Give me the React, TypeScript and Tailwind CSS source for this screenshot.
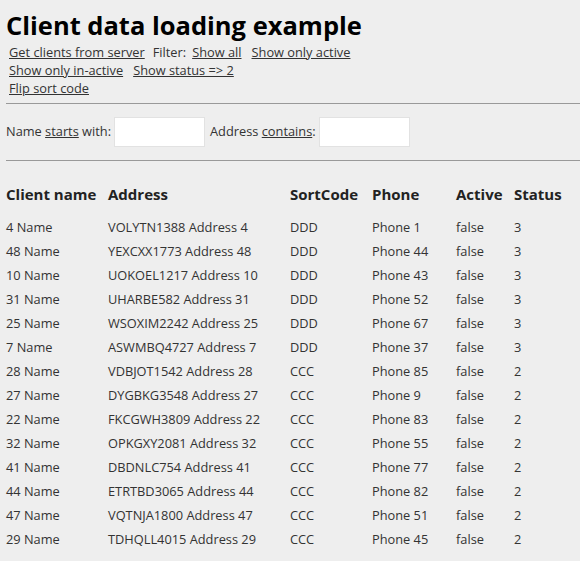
import React from 'react';

type Client = {
  name: string;
  address: string;
  sortCode: string;
  phone: string;
  active: boolean;
  status: number;
};

const clients: Client[] = [
  { name: '4 Name', address: 'VOLYTN1388 Address 4', sortCode: 'DDD', phone: 'Phone 1', active: false, status: 3 },
  { name: '48 Name', address: 'YEXCXX1773 Address 48', sortCode: 'DDD', phone: 'Phone 44', active: false, status: 3 },
  { name: '10 Name', address: 'UOKOEL1217 Address 10', sortCode: 'DDD', phone: 'Phone 43', active: false, status: 3 },
  { name: '31 Name', address: 'UHARBE582 Address 31', sortCode: 'DDD', phone: 'Phone 52', active: false, status: 3 },
  { name: '25 Name', address: 'WSOXIM2242 Address 25', sortCode: 'DDD', phone: 'Phone 67', active: false, status: 3 },
  { name: '7 Name', address: 'ASWMBQ4727 Address 7', sortCode: 'DDD', phone: 'Phone 37', active: false, status: 3 },
  { name: '28 Name', address: 'VDBJOT1542 Address 28', sortCode: 'CCC', phone: 'Phone 85', active: false, status: 2 },
  { name: '27 Name', address: 'DYGBKG3548 Address 27', sortCode: 'CCC', phone: 'Phone 9', active: false, status: 2 },
  { name: '22 Name', address: 'FKCGWH3809 Address 22', sortCode: 'CCC', phone: 'Phone 83', active: false, status: 2 },
  { name: '32 Name', address: 'OPKGXY2081 Address 32', sortCode: 'CCC', phone: 'Phone 55', active: false, status: 2 },
  { name: '41 Name', address: 'DBDNLC754 Address 41', sortCode: 'CCC', phone: 'Phone 77', active: false, status: 2 },
  { name: '44 Name', address: 'ETRTBD3065 Address 44', sortCode: 'CCC', phone: 'Phone 82', active: false, status: 2 },
  { name: '47 Name', address: 'VQTNJA1800 Address 47', sortCode: 'CCC', phone: 'Phone 51', active: false, status: 2 },
  { name: '29 Name', address: 'TDHQLL4015 Address 29', sortCode: 'CCC', phone: 'Phone 45', active: false, status: 2 },
];

const cols = 'grid grid-cols-[102px_182px_82px_84px_58px_1fr]';

export default function App() {
  return (
    <div className="min-h-screen bg-[#eeeeee] px-[6px] pt-[8px] text-[#333333] font-['Open_Sans',sans-serif] text-[12.8px]">
      <h1 className="m-0 text-[25.5px] font-bold leading-[34px] text-black">Client data loading example</h1>

      <div className="pl-[3px] pt-px leading-[18px]">
        <a href="#" className="underline mr-[8px]">Get clients from server</a>
        <span className="mr-[6px]">Filter:</span>
        <a href="#" className="underline mr-[10px]">Show all</a>
        <a href="#" className="underline">Show only active</a>
        <br />
        <a href="#" className="underline mr-[10px]">Show only in-active</a>
        <a href="#" className="underline">Show status =&gt; 2</a>
        <br />
        <a href="#" className="underline">Flip sort code</a>
      </div>

      <hr className="mt-[6px] border-t border-[#999999] -mr-[6px]" />

      <div className="flex items-center pt-[13px] pb-[13px]">
        <label>Name <u>starts</u> with:</label>
        <input className="ml-[3px] h-[30px] w-[91px] bg-white border border-[#e2e2e2] outline-none" />
        <label className="ml-[5px]">Address <u>contains</u>:</label>
        <input className="ml-[3px] h-[30px] w-[91px] bg-white border border-[#e2e2e2] outline-none" />
      </div>

      <hr className="border-t border-[#999999] -mr-[6px]" />

      <div className={`${cols} mt-[22px] pb-[10px] text-[15px] font-bold text-[#222222] leading-[22px]`}>
        <div>Client name</div>
        <div>Address</div>
        <div>SortCode</div>
        <div>Phone</div>
        <div>Active</div>
        <div>Status</div>
      </div>

      {clients.map((c) => (
        <div key={c.name} className={`${cols} leading-[24px]`}>
          <div>{c.name}</div>
          <div>{c.address}</div>
          <div>{c.sortCode}</div>
          <div>{c.phone}</div>
          <div>{String(c.active)}</div>
          <div>{c.status}</div>
        </div>
      ))}
    </div>
  );
}
